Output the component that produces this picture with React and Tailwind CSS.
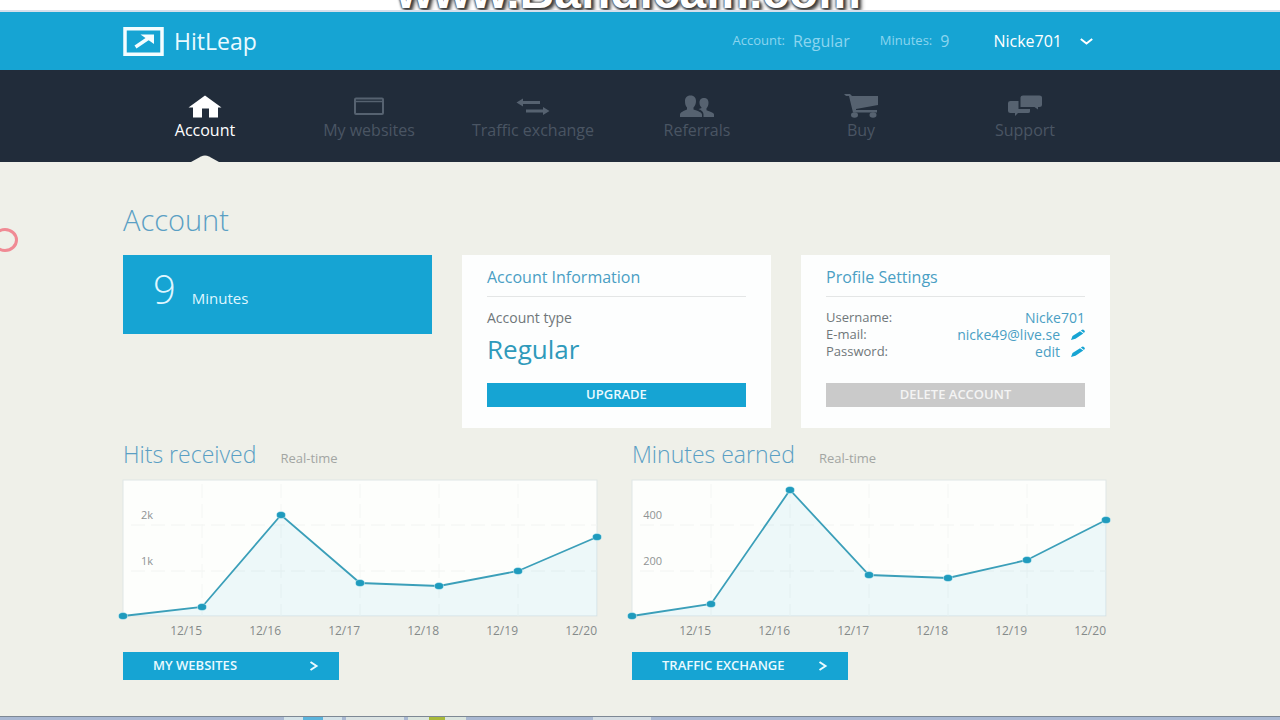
const navItems = [
  { label: "Account", icon: HomeIcon, active: true },
  { label: "My websites", icon: WindowIcon },
  { label: "Traffic exchange", icon: ExchangeIcon },
  { label: "Referrals", icon: PeopleIcon },
  { label: "Buy", icon: CartIcon },
  { label: "Support", icon: ChatIcon },
];

const days = ["12/15", "12/16", "12/17", "12/18", "12/19", "12/20"];

const charts = [
  {
    title: "Hits received",
    button: "My websites",
    ticks: ["2k", "1k"],
    points: [136, 127, 35, 103, 106, 91, 57],
  },
  {
    title: "Minutes earned",
    button: "Traffic exchange",
    ticks: ["400", "200"],
    points: [136, 124, 10, 95, 98, 80, 40],
  },
];

function HomeIcon() {
  return (
    <svg width="34" height="24" viewBox="0 0 34 24" fill="currentColor" aria-hidden="true">
      <path d="M17 1.5 33.5 13.5H30V23.5H21V14.5H14V23.5H5V13.5H.5Z" />
    </svg>
  );
}

function WindowIcon() {
  return (
    <svg width="34" height="24" viewBox="0 0 34 24" fill="none" stroke="currentColor" aria-hidden="true">
      <rect x="3" y="4.5" width="28" height="15.5" rx="1" strokeWidth="2" />
      <path d="M3 7.5H31" strokeWidth="1.5" />
    </svg>
  );
}

function ExchangeIcon() {
  return (
    <svg width="34" height="24" viewBox="0 0 34 24" fill="currentColor" aria-hidden="true">
      <path d="M.5 8.500 7 4.500V7H24V10H7V12.500Z" />
      <path d="M33.500 17 27 13V15.500H10V18.500H27V21Z" />
    </svg>
  );
}

function PeopleIcon() {
  return (
    <svg width="34" height="24" viewBox="0 0 34 24" fill="currentColor" aria-hidden="true">
      <path d="M10.500 1.500c4 0 5.500 2.500 5.500 5.500 0 3-1 5-2.500 6.500v2c4 1.500 8.500 2.500 8.500 5V23H0v-2.500c0-2.500 4-3.500 7-5v-2C5.500 12 5 10 5 7c0-3 1.500-5.500 5.500-5.500Z" />
      <path d="M24 4c3.500 0 4.500 2.200 4.500 4.800 0 2.500-.8 4.200-2 5.400v2c3.500 1.300 7.500 2.300 7.500 4.300V23H23.500v-2.500c0-3-2.500-4.500-5-5.500 1.500-.4 2.500-.5 3-1v-.5c-1.200-1.200-2-2.500-2-4.700C19.500 6.200 20.500 4 24 4Z" />
    </svg>
  );
}

function CartIcon() {
  return (
    <svg width="34" height="24" viewBox="0 0 34 24" fill="currentColor" aria-hidden="true">
      <path d="M0 0H6L8 2H34V11L12 15V16H33V18.500H9L5 2H2Z" />
      <ellipse cx="10.500" cy="21" rx="3.500" ry="2.700" />
      <ellipse cx="29" cy="21" rx="3.500" ry="2.700" />
    </svg>
  );
}

function ChatIcon() {
  return (
    <svg width="34" height="24" viewBox="0 0 34 24" fill="currentColor" aria-hidden="true">
      <path d="M15 1.500H31.500Q34 1.500 34 3.500V11Q34 13 31.500 13H30V15.500L26.500 13H12.500V3.500Q12.500 1.500 15 1.500Z" />
      <path d="M2.500 7H10.500V15H22V17.500Q22 19 20 19H10L7 22V19H2.500Q0 19 0 17V9Q0 7 2.500 7Z" />
    </svg>
  );
}

function PencilIcon() {
  return (
    <svg width="14" height="11" viewBox="0 0 14 11" fill="#16a4d3" aria-hidden="true">
      <path d="M0 11 1.5 7 9 2.200 12.300 4.600 4.500 9.700Z" />
      <path d="M9.800 1.600 11.200.7Q11.800.3 12.500.8L13.600 1.700Q14.200 2.300 13.600 2.900L13 4.100Z" />
    </svg>
  );
}

function Logo() {
  return (
    <svg width="41" height="29" viewBox="0 0 41 29" aria-hidden="true">
      <rect x="2" y="1.750" width="37" height="25.500" fill="none" stroke="#f4fdff" strokeWidth="3.500" />
      <path d="M12.500 20 25 11.500" stroke="#f4fdff" strokeWidth="3.500" fill="none" />
      <path d="M17.500 7.500H31V17Z" fill="#f4fdff" />
    </svg>
  );
}

function Chart({ points, ticks }) {
  const line = points.map((y, i) => `${i * 79},${y}`).join(" ");

  return (
    <div className="relative">
      <svg viewBox="0 0 474 136" className="block w-full overflow-visible" role="img" aria-label="Daily chart">
        <rect width="474" height="136" fill="#fdfefc" stroke="#dfe6e6" />
        {[45, 91].map((y) => (
          <path key={y} d={`M8 ${y}H474`} stroke="#f2f4f2" strokeDasharray="14 6" />
        ))}
        {[79, 158, 237, 316, 395].map((x) => (
          <path key={x} d={`M${x} 4V136`} stroke="#f4f6f4" strokeDasharray="14 6" />
        ))}
        <polygon points={`${line} 474,136`} fill="#16a4d3" fillOpacity="0.07" />
        <polyline points={line} fill="none" stroke="#3b9fb9" strokeWidth="1.8" />
        {points.map((y, i) => (
          <ellipse key={i} cx={i * 79} cy={y} rx="4.500" ry="3.500" fill="#1f9bbd" stroke="#dff6fb" strokeWidth="0.5" />
        ))}
      </svg>
      <div className="absolute top-7 left-1.5 flex w-6 flex-col items-end gap-8 text-[11px] leading-[14px] text-[#8f9494]">
        {ticks.map((tick) => (
          <span key={tick}>{tick}</span>
        ))}
      </div>
    </div>
  );
}

function ChartPanel({ title, button, ticks, points }) {
  return (
    <section>
      <div className="mb-3 flex items-baseline gap-6">
        <h2 className="text-[23px] leading-7 font-light text-[#5a9fc4]">{title}</h2>
        <span className="text-[13px] leading-5 text-[#a3a6a3]">Real-time</span>
      </div>
      <Chart points={points} ticks={ticks} />
      <div className="mt-2 grid grid-cols-6 text-right text-[12px] leading-[14px] text-[#858a8a]">
        {days.map((day) => (
          <span key={day}>{day}</span>
        ))}
      </div>
      <button
        type="button"
        className="mt-[14px] flex h-7 w-[216px] items-center justify-between bg-[#16a4d3] pr-5 pl-[30px] text-[13px] font-semibold text-[#eafaff] uppercase"
      >
        {button}
        <svg width="10" height="10" viewBox="0 0 10 10" fill="none" stroke="currentColor" strokeWidth="2" aria-hidden="true">
          <path d="M1.500 1 7.500 5 1.500 9" />
        </svg>
      </button>
    </section>
  );
}

function Card({ title, children }) {
  return (
    <section className="bg-[#fdfefe] px-[25px] pt-3 pb-[21px]">
      <h2 className="border-b border-[#e4e6e6] pb-[9px] text-[16px] leading-5 text-[#4a9fc4]">{title}</h2>
      {children}
    </section>
  );
}

function EditLink({ text }) {
  return (
    <a href="#edit" className="flex items-center gap-[11px] text-[#4a9fc4]">
      {text}
      <PencilIcon />
    </a>
  );
}

export default function App() {
  return (
    <div className="flex min-h-screen flex-col overflow-hidden bg-[#eff0e9] font-['Open_Sans',sans-serif]">
      <div className="relative h-3 overflow-hidden border-b-2 border-[#d5dfeb] bg-white">
        <span className="absolute bottom-[-6px] left-[396px] text-[48px] leading-[48px] font-bold text-white [font-family:'Liberation_Sans',sans-serif] [text-shadow:0_0_2px_#333,0_0_3px_#333,2px_2px_3px_#444,3px_3px_4px_#666]">
          www.Bandicam.com
        </span>
      </div>

      <header className="flex h-[58px] items-center bg-[#16a4d3] pr-[187px] pl-[123px] text-[#8bd5ef]">
        <a href="#home" className="flex items-center gap-[10px] text-[23px] text-[#eafaff]">
          <Logo />
          HitLeap
        </a>
        <div className="ml-auto flex items-center gap-[30px]">
          <span className="flex items-center gap-2 text-[13px]">
            Account: <span className="text-[16px]">Regular</span>
          </span>
          <span className="flex items-center gap-2 text-[13px]">
            Minutes: <span className="text-[16px]">9</span>
          </span>
        </div>
        <button type="button" className="ml-11 flex items-center gap-[18px] text-[16px] text-white">
          Nicke701
          <svg width="13" height="7" viewBox="0 0 13 7" fill="none" stroke="currentColor" strokeWidth="2" aria-hidden="true">
            <path d="M.8 1 6.500 5.500 12.200 1" />
          </svg>
        </button>
      </header>

      <nav className="grid h-[92px] grid-cols-6 bg-[#212c3a] pr-[173px] pl-[123px]">
        {navItems.map(({ label, icon: Icon, active }) => (
          <a
            key={label}
            href="#nav"
            className={`flex flex-col items-center pt-6 text-[16px] leading-5 whitespace-nowrap ${
              active ? "text-white" : "text-[#4a5563]"
            }`}
          >
            <span className={active ? "h-6" : "h-6 text-[#566270]"}>
              <Icon />
            </span>
            <span className="mt-[2px]">{label}</span>
            {active && (
              <svg width="28" height="7" viewBox="0 0 28 7" className="mt-auto" aria-hidden="true">
                <path d="M0 7 10 1.500Q14-.5 18 1.500L28 7Z" fill="#eff0e9" />
              </svg>
            )}
          </a>
        ))}
      </nav>

      <main className="relative flex-1 pt-10 pr-[170px] pl-[123px]">
        <span className="absolute top-[66px] -left-2 h-6 w-[26px] rounded-[50%] border-3 border-[#f08a94]" />
        <h1 className="text-[29px] leading-9 font-light text-[#5a9fc4]">Account</h1>

        <div className="mt-[17px] grid grid-cols-3 items-start gap-[30px]">
          <section className="flex h-[79px] items-baseline gap-4 bg-[#16a4d3] pt-[10px] pl-[30px] text-[#dff6ff]">
            <span className="text-[40px] leading-[48px] font-light">9</span>
            <span className="text-[15px]">Minutes</span>
          </section>

          <Card title="Account Information">
            <p className="mt-3 text-[14px] leading-[18px] text-[#70777a]">Account type</p>
            <p className="mt-1 text-[26px] leading-9 text-[#2f9abb]">Regular</p>
            <button type="button" className="mt-4 block h-6 w-full bg-[#16a4d3] text-[13px] font-semibold text-[#eafaff]">
              UPGRADE
            </button>
          </Card>

          <Card title="Profile Settings">
            <dl className="mt-3 text-[14px] leading-[17px] text-[#4a9fc4]">
              <div className="flex justify-between">
                <dt className="text-[13px] text-[#70777a]">Username:</dt>
                <dd>Nicke701</dd>
              </div>
              <div className="flex justify-between">
                <dt className="text-[13px] text-[#70777a]">E-mail:</dt>
                <dd>
                  <EditLink text="nicke49@live.se" />
                </dd>
              </div>
              <div className="flex justify-between">
                <dt className="text-[13px] text-[#70777a]">Password:</dt>
                <dd>
                  <EditLink text="edit" />
                </dd>
              </div>
            </dl>
            <button type="button" className="mt-[23px] block h-6 w-full bg-[#cacaca] text-[13px] font-semibold text-[#f4f4f4]">
              DELETE ACCOUNT
            </button>
          </Card>
        </div>

        <div className="mt-3 grid grid-cols-2 gap-[35px] pr-1">
          {charts.map((chart) => (
            <ChartPanel key={chart.title} {...chart} />
          ))}
        </div>
      </main>

      <footer className="flex h-1 items-stretch border-t border-[#7d8894] bg-[#a9b8d2]">
        <div className="ml-[284px] flex gap-1">
          <span className="flex w-[58px] justify-center bg-[#d5e3e8]"><i className="w-5 bg-[#5bb4dc]" /></span>
          <span className="w-[58px] bg-[#dbe3e3]" />
          <span className="flex w-[58px] justify-center bg-[#dbe5de]"><i className="w-4 bg-[#a8b93a]" /></span>
        </div>
        <span className="ml-[127px] w-[58px] bg-[#d5dde3]" />
      </footer>
    </div>
  );
}
